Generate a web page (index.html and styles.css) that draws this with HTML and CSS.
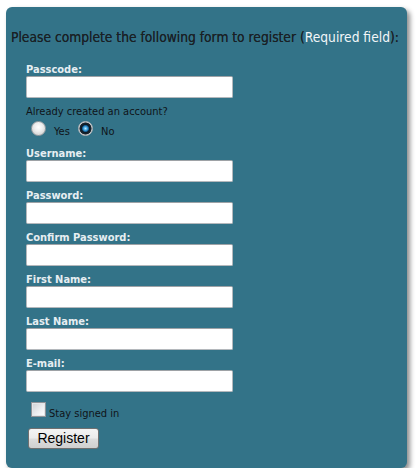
FILE: index.html
```html
<!DOCTYPE html>
<html>
<head>
<meta charset="utf-8">
<link rel="stylesheet" href="styles.css">
</head>
<body>
<div class="panel">
  <h2 class="title">Please complete the following form to register (<span class="req">Required field</span>):</h2>
  <form class="form">
    <label class="lbl">Passcode:</label>
    <input class="field" type="text">
    <div class="question">Already created an account?</div>
    <div class="radios">
      <span class="radio"></span><span class="rtext">Yes</span>
      <span class="radio on"></span><span class="rtext">No</span>
    </div>
    <label class="lbl">Username:</label>
    <input class="field" type="text">
    <label class="lbl">Password:</label>
    <input class="field" type="password">
    <label class="lbl">Confirm Password:</label>
    <input class="field" type="password">
    <label class="lbl">First Name:</label>
    <input class="field" type="text">
    <label class="lbl">Last Name:</label>
    <input class="field" type="text">
    <label class="lbl">E-mail:</label>
    <input class="field" type="text">
    <div class="stay"><span class="check"></span><span class="stext">Stay signed in</span></div>
    <button class="btn" type="button">Register</button>
  </form>
</div>
</body>
</html>
```
FILE: styles.css
```css
html, body {
  margin: 0;
  padding: 0;
  background: #ffffff;
}
.panel {
  margin: 7px 0 0 6px;
  width: 401px;
  height: 461px;
  box-sizing: border-box;
  background: #337388;
  border-radius: 6px;
  box-shadow: 3px 3px 5px rgba(0, 0, 0, 0.45);
  padding: 22px 0 0 5px;
  font-family: "DejaVu Sans Condensed", "DejaVu Sans", sans-serif;
}
.title {
  margin: 0;
  font-size: 13.7px;
  line-height: 16px;
  font-weight: normal;
  color: #1a2024;
  text-shadow: 0 0 0.4px rgba(20, 26, 30, 0.8);
  white-space: nowrap;
}
.req {
  color: #f2f6f8;
  text-shadow: none;
}
.form {
  display: flex;
  flex-direction: column;
  align-items: flex-start;
  margin: 18px 0 0 15px;
}
.lbl {
  font-size: 11px;
  line-height: 13px;
  font-weight: bold;
  color: #e6eef2;
  height: 13px;
}
.field {
  box-sizing: border-box;
  width: 207px;
  height: 22px;
  margin: 0 0 7px 0;
  padding: 0;
  border: 1px solid #b4b8bc;
  border-top-color: #9ea2a6;
  border-radius: 2px;
  background: #ffffff;
}
.question {
  font-size: 11px;
  line-height: 13px;
  color: #101418;
}
.radios {
  display: flex;
  align-items: flex-start;
  height: 29px;
  padding: 3px 0 0 5px;
  box-sizing: border-box;
  font-size: 11px;
  color: #101418;
}
.radio {
  width: 15px;
  height: 15px;
  box-sizing: border-box;
  border-radius: 50%;
  border: 1px solid #9a9ea2;
  background: radial-gradient(circle at 50% 40%, #ffffff 0%, #eeeeee 40%, #cfcfcf 85%, #b8b8b8 100%);
}
.radio.on {
  border: 1px solid #b0b4b8;
  background: radial-gradient(circle at 50% 50%, #bfeaff 0%, #3aa0dc 22%, #155d92 34%, #0e1a24 42%, #1a2630 62%, #dcdcdc 70%, #f2f2f2 85%, #c8c8c8 100%);
}
.rtext {
  margin: 4px 0 0 8px;
  width: 24px;
  line-height: 13px;
}
.stay {
  display: flex;
  align-items: flex-start;
  margin: 3px 0 0 5px;
  height: 26px;
}
.check {
  width: 15px;
  height: 15px;
  box-sizing: border-box;
  border: 1px solid #8f9398;
  background: linear-gradient(135deg, #cdd0d3 0%, #eef0f2 60%, #ffffff 100%);
  box-shadow: inset 0 0 0 1px #e4e6e8;
}
.stext {
  margin: 5px 0 0 3px;
  font-size: 11px;
  line-height: 13px;
  color: #101418;
}
.btn {
  margin-left: 2px;
  width: 71px;
  height: 21px;
  padding: 0;
  border: 1px solid #707070;
  border-radius: 3px;
  background: linear-gradient(#f4f4f4 0%, #ebebeb 48%, #dddddd 52%, #cfcfcf 100%);
  font-family: "Liberation Sans", Arial, sans-serif;
  font-size: 14px;
  line-height: 19px;
  color: #000000;
}
```
